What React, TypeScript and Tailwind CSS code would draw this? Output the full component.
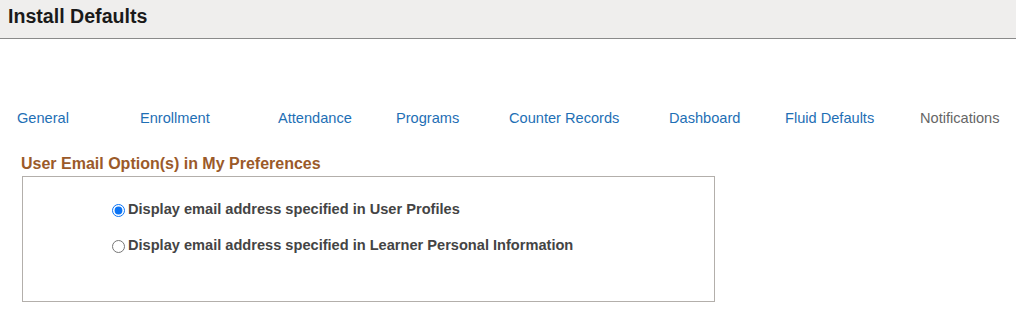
const tabs = [
  { label: "General", w: "w-[123px]" },
  { label: "Enrollment", w: "w-[138px]" },
  { label: "Attendance", w: "w-[118px]" },
  { label: "Programs", w: "w-[113px]" },
  { label: "Counter Records", w: "w-[160px]" },
  { label: "Dashboard", w: "w-[116px]" },
  { label: "Fluid Defaults", w: "w-[135px]" },
  { label: "Notifications", w: "w-[96px]", active: true },
];

export default function App() {
  return (
    <div className="w-[1016px] h-[313px] bg-white font-['Liberation_Sans',Arial,sans-serif] overflow-hidden">
      {/* Page header */}
      <div className="h-[39px] bg-[#efeeed] border-b border-[#8a8a8a] pl-2 pt-[5px]">
        <h1 className="text-[19.6px] font-bold text-[#1a1a1a] leading-[22px]">Install Defaults</h1>
      </div>

      {/* Tabs */}
      <div className="flex pl-[17px] mt-[70px]">
        {tabs.map((t) => (
          <div
            key={t.label}
            className={`${t.w} shrink-0 text-[14.6px] leading-[18px] whitespace-nowrap ${t.active ? "text-[#666666]" : "text-[#1e6fb5]"}`}
          >
            {t.label}
          </div>
        ))}
      </div>

      {/* Section */}
      <div className="pl-[21px] mt-[28px]">
        <h2 className="text-[16px] font-bold text-[#9b5a29] leading-[18px]">
          User Email Option(s) in My Preferences
        </h2>
        <div className="ml-px mt-[3px] w-[693px] h-[126px] border border-[#b3afab] pt-[24px] pl-[89px]">
          <label className="flex items-center gap-[3px] h-[18px] text-[14.6px] font-bold text-[#444444]">
            <input type="radio" name="email" defaultChecked className="w-[13px] h-[13px] m-0 accent-[#0b74f5]" />
            Display email address specified in User Profiles
          </label>
          <label className="flex items-center gap-[3px] h-[18px] mt-[18px] text-[14.6px] font-bold text-[#444444]">
            <input type="radio" name="email" className="w-[13px] h-[13px] m-0" />
            Display email address specified in Learner Personal Information
          </label>
        </div>
      </div>
    </div>
  );
}
